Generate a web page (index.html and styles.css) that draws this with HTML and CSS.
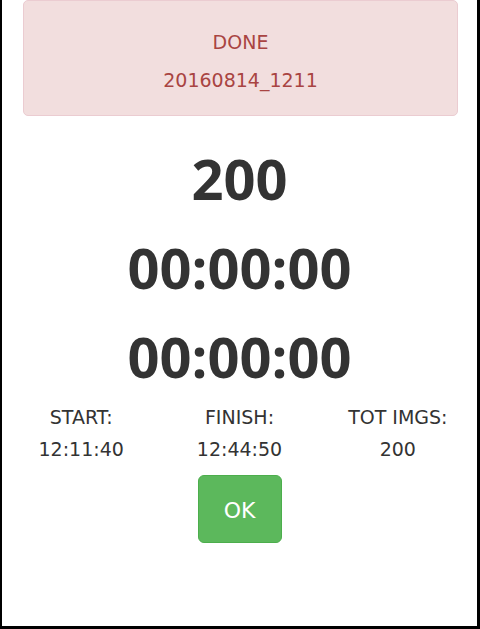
FILE: index.html
```html
<!DOCTYPE html>
<html>
<head>
<meta charset="utf-8">
<link rel="stylesheet" href="styles.css">
</head>
<body>
<div class="frame">
  <div class="alert">
    <div class="alert-line">DONE</div>
    <div class="alert-line">20160814_1211</div>
  </div>
  <div class="counters">
    <div class="big">200</div>
    <div class="big">00:00:00</div>
    <div class="big">00:00:00</div>
  </div>
  <div class="stats">
    <div class="stat"><div>START:</div><div>12:11:40</div></div>
    <div class="stat"><div>FINISH:</div><div>12:44:50</div></div>
    <div class="stat"><div>TOT IMGS:</div><div>200</div></div>
  </div>
  <div class="actions">
    <button class="ok">OK</button>
  </div>
</div>
</body>
</html>
```

FILE: styles.css
```css
html, body {
  margin: 0;
  padding: 0;
  background: #fff;
}
.frame {
  box-sizing: border-box;
  width: 480px;
  height: 629px;
  border-left: 2px solid #000;
  border-right: 3px solid #000;
  border-bottom: 3px solid #000;
  background: #fff;
  font-family: "DejaVu Sans", Verdana, sans-serif;
  color: #333;
  overflow: hidden;
}
.alert {
  margin: 0 19px 0 21px;
  padding: 22px 0 16px;
  background: #f2dede;
  border: 1px solid #ebccd1;
  border-radius: 5px;
  color: #a94442;
  text-align: center;
  font-size: 19px;
  line-height: 38px;
}
.counters {
  margin-top: 18px;
  text-align: center;
}
.big {
  font-family: "Open Sans", sans-serif;
  font-weight: 700;
  font-size: 56px;
  line-height: 89px;
  color: #333;
}
.stats {
  display: grid;
  grid-template-columns: 1fr 1fr 1fr;
  text-align: center;
  font-size: 19px;
  line-height: 32px;
  color: #333;
}
.actions {
  display: flex;
  justify-content: center;
  margin-top: 10px;
}
.ok {
  box-sizing: border-box;
  width: 84px;
  height: 68px;
  background: #5cb85c;
  border: 1px solid #4cae4c;
  border-radius: 6px;
  color: #fff;
  font-family: "DejaVu Sans", Verdana, sans-serif;
  font-size: 22px;
  padding: 2px 0 0;
}
```
